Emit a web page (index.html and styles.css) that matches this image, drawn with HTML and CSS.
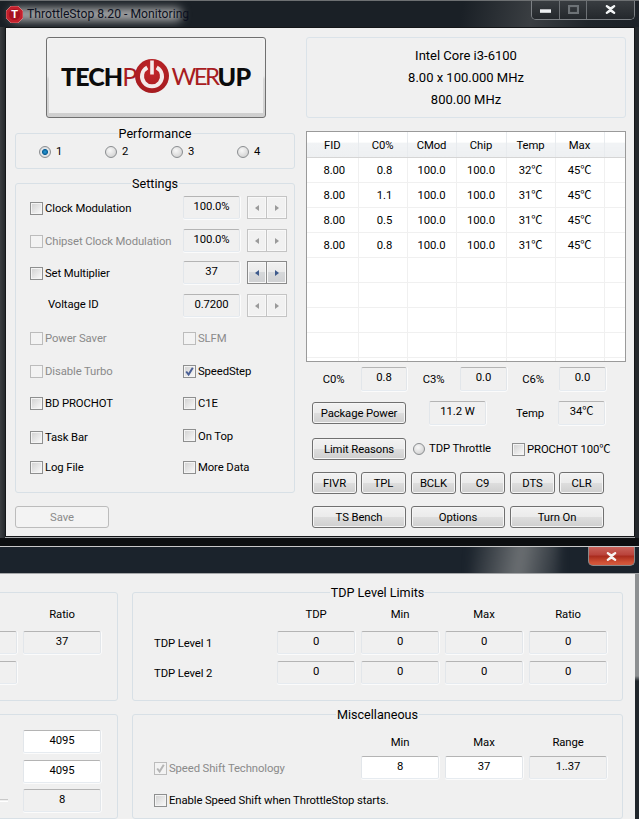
FILE: index.html
```html
<!DOCTYPE html>
<html lang="en">
<head>
<meta charset="utf-8">
<title>ThrottleStop 8.20 - Monitoring</title>
<link rel="stylesheet" href="styles.css">
</head>
<body>
<section class="window win-main">
  <header class="titlebar">
    <div class="glow"></div>
    <svg class="app-icon" width="17" height="17" viewBox="0 0 17 17"><polygon points="5,0 12,0 17,5 17,12 12,17 5,17 0,12 0,5" fill="#c2202c" stroke="#e9a0a0" stroke-width=".6"/><circle cx="8.5" cy="8.5" r="5.6" fill="#a5121f"/><text x="8.5" y="12" text-anchor="middle" class="app-t">T</text></svg>
    <h1 class="title">ThrottleStop 8.20 - Monitoring</h1>
    <div class="caption">
      <div class="cap cap-min"><svg width="11" height="4" viewBox="0 0 11 4"><rect width="11" height="3.5" y=".3" fill="#eef0f2"/></svg></div>
      <div class="cap cap-max"><svg width="11" height="9" viewBox="0 0 11 9"><rect x="1" y="1" width="9" height="7" fill="none" stroke="#6d7276" stroke-width="2.2"/></svg></div>
      <div class="cap cap-close"><svg width="11" height="9" viewBox="0 0 11 9"><path d="M1 .5 5.5 3.3 10 .5M1 8.5 5.5 5.7 10 8.5M1.5 1 9.5 8M9.5 1 1.5 8" fill="none" stroke="#f2f4f5" stroke-width="2"/></svg></div>
    </div>
  </header>
  <main class="client client-main">
    <div class="col-left">
      <div class="logo-btn">
        <div class="logo-face">
          <span class="lg-black">TECH</span><span class="lg-red">P</span>
          <svg class="power" width="34" height="36" viewBox="0 0 34 36"><defs><radialGradient id="pw" cx=".5" cy=".35" r=".75"><stop offset="0" stop-color="#c4262a"/><stop offset="1" stop-color="#a01a1e"/></radialGradient></defs><circle cx="17" cy="18" r="17" fill="url(#pw)"/><path d="M12.3 9.5A10 10 0 1 0 21.7 9.5" fill="none" stroke="#f4eaea" stroke-width="4"/><rect x="15.2" y="2.5" width="3.6" height="14" fill="#f4eaea"/></svg>
          <span class="lg-red lg-wer">WER</span><span class="lg-black lg-up">UP</span>
        </div>
      </div>

      <div class="group group-perf">
        <div class="group-title">Performance</div>
        <div class="perf-grid">
          <div class="radio-item"><span class="radio on"></span>1</div>
          <div class="radio-item"><span class="radio"></span>2</div>
          <div class="radio-item"><span class="radio"></span>3</div>
          <div class="radio-item"><span class="radio"></span>4</div>
        </div>
      </div>

      <div class="group group-settings">
        <div class="group-title">Settings</div>
        <div class="settings-grid">
          <div class="check low"><span class="cb"></span>Clock Modulation</div>
          <div class="field">100.0%</div>
          <div class="spin"><span class="sp"><i class="al"></i></span><span class="sp"><i class="ar"></i></span></div>

          <div class="check low off"><span class="cb"></span>Chipset Clock Modulation</div>
          <div class="field">100.0%</div>
          <div class="spin"><span class="sp"><i class="al"></i></span><span class="sp"><i class="ar"></i></span></div>

          <div class="check low"><span class="cb"></span>Set Multiplier</div>
          <div class="field">37</div>
          <div class="spin live"><span class="sp"><i class="al"></i></span><span class="sp"><i class="ar"></i></span></div>

          <div class="voltage">Voltage ID</div>
          <div class="field">0.7200</div>
          <div class="spin"><span class="sp"><i class="al"></i></span><span class="sp"><i class="ar"></i></span></div>

          <div class="check off"><span class="cb"></span>Power Saver</div>
          <div class="check off span2"><span class="cb"></span>SLFM</div>

          <div class="check off"><span class="cb"></span>Disable Turbo</div>
          <div class="check span2"><span class="cb"><svg width="11" height="11" viewBox="0 0 11 11"><path d="M2.2 5.5 4.6 8.6 8.8 1.8" fill="none" stroke="#4a5f95" stroke-width="2"/></svg></span>SpeedStep</div>

          <div class="check"><span class="cb"></span>BD PROCHOT</div>
          <div class="check span2"><span class="cb"></span>C1E</div>

          <div class="check"><span class="cb"></span>Task Bar</div>
          <div class="check span2 up"><span class="cb"></span>On Top</div>

          <div class="check"><span class="cb"></span>Log File</div>
          <div class="check span2"><span class="cb"></span>More Data</div>
        </div>
      </div>

      <div class="btn btn-save">Save</div>
    </div>

    <div class="col-right">
      <div class="info">
        <div>Intel Core i3-6100</div>
        <div>8.00 x 100.000 MHz</div>
        <div>800.00 MHz</div>
      </div>

      <div class="table-wrap">
        <table class="cores">
          <colgroup><col class="c1"><col class="c2"><col class="c2"><col class="c3"><col class="c2"><col class="c2"><col class="c4"></colgroup>
          <thead><tr><th>FID</th><th>C0%</th><th>CMod</th><th>Chip</th><th>Temp</th><th>Max</th><th></th></tr></thead>
          <tbody>
            <tr><td>8.00</td><td>0.8</td><td>100.0</td><td>100.0</td><td>32℃</td><td>45℃</td><td></td></tr>
            <tr><td>8.00</td><td>1.1</td><td>100.0</td><td>100.0</td><td>31℃</td><td>45℃</td><td></td></tr>
            <tr><td>8.00</td><td>0.5</td><td>100.0</td><td>100.0</td><td>31℃</td><td>45℃</td><td></td></tr>
            <tr><td>8.00</td><td>0.8</td><td>100.0</td><td>100.0</td><td>31℃</td><td>45℃</td><td></td></tr>
            <tr><td></td><td></td><td></td><td></td><td></td><td></td><td></td></tr>
            <tr><td></td><td></td><td></td><td></td><td></td><td></td><td></td></tr>
            <tr><td></td><td></td><td></td><td></td><td></td><td></td><td></td></tr>
            <tr><td></td><td></td><td></td><td></td><td></td><td></td><td></td></tr>
            <tr><td></td><td></td><td></td><td></td><td></td><td></td><td></td></tr>
          </tbody>
        </table>
      </div>

      <div class="row row-c">
        <span class="lbl l55">C0%</span><div class="field w46">0.8</div>
        <span class="lbl l53">C3%</span><div class="field w47">0.0</div>
        <span class="lbl l52">C6%</span><div class="field w47">0.0</div>
      </div>
      <div class="row row-power">
        <div class="btn w94">Package Power</div>
        <div class="field w57">11.2 W</div>
        <span class="lbl temp">Temp</span>
        <div class="field w47">34℃</div>
      </div>
      <div class="row row-limit">
        <div class="btn w94">Limit Reasons</div>
        <div class="tdp"><span class="radio"></span>TDP Throttle</div>
        <div class="check prochot"><span class="cb"></span>PROCHOT 100℃</div>
      </div>
      <div class="row row-small">
        <div class="pair"><div class="btn w45">FIVR</div><div class="btn w45">TPL</div></div>
        <div class="pair"><div class="btn w45">BCLK</div><div class="btn w45">C9</div></div>
        <div class="pair"><div class="btn w45">DTS</div><div class="btn w45">CLR</div></div>
      </div>
      <div class="row row-big">
        <div class="btn w94">TS Bench</div>
        <div class="btn w94">Options</div>
        <div class="btn w94">Turn On</div>
      </div>
    </div>
  </main>
</section>

<section class="window win-options">
  <header class="titlebar titlebar-2">
    <div class="streak"></div>
    <div class="cap-red"><svg width="11" height="9" viewBox="0 0 11 9"><path d="M1 .5 5.5 3.3 10 .5M1 8.5 5.5 5.7 10 8.5M1.5 1 9.5 8M9.5 1 1.5 8" fill="none" stroke="#f7f2f0" stroke-width="2"/></svg></div>
  </header>
  <main class="client client-options">
    <div class="group side side-top">
      <div class="side-grid side-grid-top">
        <span></span><span class="head">Ratio</span>
        <div class="field"></div><div class="field">37</div>
        <div class="field"></div>
      </div>
    </div>
    <div class="group wide wide-top">
      <div class="group-title">TDP Level Limits</div>
      <div class="wide-grid tdp-grid">
        <span></span><span class="head">TDP</span><span class="head">Min</span><span class="head">Max</span><span class="head">Ratio</span>
        <span class="rowlabel">TDP Level 1</span><div class="field">0</div><div class="field">0</div><div class="field">0</div><div class="field">0</div>
        <span class="rowlabel">TDP Level 2</span><div class="field">0</div><div class="field">0</div><div class="field">0</div><div class="field">0</div>
      </div>
    </div>
    <div class="group side side-bottom">
      <div class="side-grid side-grid-bottom">
        <span></span><div class="field white">4095</div>
        <span></span><div class="field white">4095</div>
        <span class="etch"></span><div class="field">8</div>
      </div>
    </div>
    <div class="group wide wide-bottom">
      <div class="group-title">Miscellaneous</div>
      <div class="wide-grid misc-grid">
        <span></span><span></span><span class="head">Min</span><span class="head">Max</span><span class="head">Range</span>
        <div class="check off wide-check"><span class="cb"><svg width="11" height="11" viewBox="0 0 11 11"><path d="M2.2 5.5 4.6 8.6 8.8 1.8" fill="none" stroke="#b5b5b5" stroke-width="2"/></svg></span>Speed Shift Technology</div>
        <div class="field white">8</div><div class="field white">37</div><div class="field">1..37</div>
        <div class="check full-check"><span class="cb"></span>Enable Speed Shift when ThrottleStop starts.</div>
      </div>
    </div>
  </main>
</section>
</body>
</html>
```
FILE: styles.css
```css
* { box-sizing: border-box; }
html, body { margin: 0; padding: 0; }
body {
  position: relative;
  width: 639px;
  height: 819px;
  overflow: hidden;
  background: #0c0e10;
  font: 11.3px/16px Roboto, "Noto Sans CJK SC", sans-serif;
  letter-spacing: -.1px;
  color: #000;
}
.window { position: absolute; left: 0; width: 639px; overflow: hidden; }
.win-main { top: 0; height: 538px; background: linear-gradient(90deg, #3a3d40 0, #24282c 5px); }
.win-options { top: 546px; height: 273px; background: linear-gradient(#8d9092 0, #8d9092 130px, #20262b 135px); }

/* title bars */
.titlebar {
  position: relative;
  display: flex;
  align-items: center;
  height: 27px;
  overflow: hidden;
  border-top: 1px solid #6d7072;
  background: linear-gradient(100deg, #1a2026 0, #1a2026 72%, #3a3e42 83%, #20262b 92%, #1c2127 100%);
}
.titlebar-2 {
  height: 28px;
  border-top: 1px solid #c8c8c8;
  border-bottom: 1px solid #a5a7a9;
  background: #1b232c;
}
.glow {
  position: absolute;
  left: 10px;
  top: 7px;
  width: 172px;
  height: 13px;
  border-radius: 6px;
  background: #a9aaab;
  filter: blur(5px);
}
.streak {
  position: absolute;
  left: 470px;
  top: -8px;
  width: 90px;
  height: 44px;
  background: linear-gradient(100deg, rgba(120,125,128,0) 0, #6c7073 55%, rgba(120,125,128,.1) 100%);
  filter: blur(5px);
}
.app-icon { position: relative; margin-left: 6px; flex: none; }
.app-t { font: 700 11px "Liberation Sans", sans-serif; fill: #fff; }
.title {
  position: relative;
  margin: 0 0 0 4px;
  font: 400 12.2px/16px Roboto, sans-serif;
  letter-spacing: 0;
  color: #0c1020;
  white-space: nowrap;
}
.caption {
  position: absolute;
  top: -1px;
  left: 531px;
  display: flex;
  width: 104px;
  height: 20px;
  border: 1px solid #7c8084;
  border-top: 0;
  border-radius: 0 0 5px 5px;
  overflow: hidden;
}
.cap { display: flex; align-items: center; justify-content: center; background: linear-gradient(#3a3e42, #24282c); }
.cap-min { width: 28px; border-right: 1px solid #6d7175; padding-top: 3px; }
.cap-max { width: 27px; border-right: 1px solid #6d7175; }
.cap-close { flex: 1; }
.cap-red {
  position: absolute;
  top: 0;
  left: 588px;
  width: 47px;
  height: 19px;
  display: flex;
  align-items: center;
  justify-content: center;
  border: 1px solid #8a8a8a;
  border-top: 0;
  border-radius: 0 0 5px 5px;
  background: linear-gradient(#c9625a 0, #b9423a 45%, #a82a1c 50%, #cf5135 85%, #d25a40 100%);
}

/* clients */
.client { background: #f0f0f0; }
.client-main {
  display: flex;
  gap: 11px;
  width: 630px;
  height: 510px;
  margin-left: 5px;
  padding: 9px 0 0 9px;
  border: 1px solid #141618;
  box-shadow: 0 1px 0 #a5a7a9;
}
.client-options {
  display: grid;
  grid-template-columns: 188px 491px;
  grid-template-rows: 109px 1fr;
  column-gap: 14px;
  row-gap: 13px;
  width: 635px;
  height: 245px;
  margin-left: 0;
  padding-top: 18px;
  overflow: hidden;
}
.col-left { width: 280px; flex: none; }
.col-right { width: 320px; flex: none; }

/* logo */
.logo-btn {
  width: 220px;
  height: 81px;
  margin-left: 31px;
  padding: 1px 2px 4px;
  border: 1px solid #707070;
  border-radius: 3px;
  background: linear-gradient(#f4f4f4 0, #ececec 48%, #d9d9d9 52%, #cfcfcf 100%);
}
.logo-face {
  display: flex;
  align-items: center;
  justify-content: flex-start;
  height: 100%;
  padding-left: 12px;
  background: #f0f0f0;
  font: 700 25px/30px "Lato", sans-serif;
  letter-spacing: -.9px;
}
.lg-black { color: #0b0b0b; font-weight: 900; }
.lg-red { color: #a81c22; font-weight: 400; }
.lg-wer { font-size: 24px; letter-spacing: -2.6px; }
.lg-up { letter-spacing: -.4px; }
.power { margin: -1px 2px 0 -1px; flex: none; }

/* groups */
.group {
  border: 1px solid #d8e0e6;
  border-radius: 3px;
}
.group-title {
  width: fit-content;
  height: 16px;
  margin: -8px auto 0;
  padding: 0 1px;
  background: #f0f0f0;
  font-size: 12.6px;
  letter-spacing: 0;
  line-height: 16px;
}
.group-perf { height: 36px; margin-top: 15px; }
.perf-grid {
  display: grid;
  grid-template-columns: repeat(4, 66px);
  padding: 0 0 0 23px;
  height: 20px;
}
.radio-item { display: flex; align-items: center; gap: 5px; }
.radio {
  flex: none;
  width: 12px;
  height: 12px;
  border: 1px solid #8a8d90;
  border-radius: 50%;
  background: radial-gradient(circle at 40% 35%, #f8f8f8 0, #dcdcdc 60%, #c4c4c4 100%);
}
.radio.on { background: radial-gradient(circle, #2a9bd6 0, #0b5f96 38%, #e4e6e8 46%, #cfd2d5 100%); }

.group-settings { height: 310px; margin-top: 14px; }
.settings-grid {
  display: grid;
  grid-template-columns: 153px 57px 40px;
  grid-template-rows: 33px 32px 33px 33px 33px 32px 34px 30px 30px;
  column-gap: 0;
  padding: 4px 0 0 14px;
  align-items: start;
}
.settings-grid .spin { margin-left: 7px; width: 40px; }
.span2 { grid-column: 2 / span 2; }
.check { display: flex; align-items: flex-start; gap: 2px; height: 23px; padding-top: 4px; white-space: nowrap; }
.check.low { height: 25px; padding-top: 5px; }
.check.up { height: 21px; padding-top: 3px; }
.check.off { color: #8a8a8a; }
.cb {
  flex: none;
  display: flex;
  align-items: center;
  justify-content: center;
  width: 13px;
  height: 13px;
  margin-top: 1px;
  border: 1px solid #8e8f8f;
  background: linear-gradient(135deg, #d0d0d0 0, #eeeeee 70%, #fafafa 100%);
  box-shadow: inset 0 0 0 1px #f4f4f4;
}
.check.up .cb { margin-top: 0; }
.check.off .cb { border-color: #bcbcbc; background: #f3f3f3; box-shadow: none; }
.voltage { padding-left: 18px; line-height: 21px; height: 23px; }

/* fields */
.field {
  display: flex;
  align-items: center;
  justify-content: center;
  height: 23px;
  padding-bottom: 2px;
  border: 1px solid;
  border-color: #b4b4b4 #e2e6ea #e6ebf0 #e2e6ea;
  border-radius: 2px;
  box-shadow: 0 1px 0 #fbfbfb, 1px 0 0 #fbfbfb;
  background: #f0f0f0;
  white-space: nowrap;
}
.field.white { background: #fff; }
.w46 { width: 46px; }
.w47 { width: 47px; }
.w57 { width: 57px; }

/* spinners */
.spin { display: flex; height: 23px; }
.sp {
  display: flex;
  align-items: center;
  justify-content: center;
  width: 20px;
  height: 23px;
  border: 1px solid #c4c4c4;
  background: #f1f1f1;
  box-shadow: inset 0 0 0 1px #f8f8f8;
}
.sp + .sp { border-left-width: 0; width: 20px; }
.al, .ar { width: 0; height: 0; border-top: 3.5px solid transparent; border-bottom: 3.5px solid transparent; }
.al { border-right: 4px solid #9a9a9a; }
.ar { border-left: 4px solid #9a9a9a; }
.live .sp { border-color: #8a8a8a; background: linear-gradient(#f1f1f1 0, #ebebeb 45%, #d6d8da 50%, #cfd0d2 100%); }
.live .al { border-right-color: #3e5a8c; }
.live .ar { border-left-color: #3e5a8c; }

/* buttons */
.btn {
  display: flex;
  align-items: center;
  justify-content: center;
  height: 22px;
  padding-top: 2px;
  border: 1px solid #707070;
  border-radius: 3px;
  box-shadow: inset 0 0 0 1px #f6f6f6;
  background: linear-gradient(#f2f2f2 0, #ebebeb 48%, #dddddd 52%, #cfcfcf 100%);
  white-space: nowrap;
}
.btn-save {
  width: 94px;
  margin-top: 13px;
  border-color: #bcbcbc;
  background: #f3f3f3;
  box-shadow: none;
  color: #8a8a8a;
}
.w94 { width: 94px; flex: none; }
.w45 { width: 45px; flex: none; }

/* right column */
.info {
  display: flex;
  flex-direction: column;
  align-items: center;
  width: 320px;
  height: 81px;
  padding-top: 7px;
  border: 1px solid #dbe3e9;
  border-radius: 3px;
  font-size: 13px;
  letter-spacing: 0;
  line-height: 22px;
}
.table-wrap {
  width: 320px;
  height: 231px;
  margin-top: 13px;
  border: 1px solid #9a9a9a;
  background: #fff;
  overflow: hidden;
}
.cores { width: 318px; border-collapse: collapse; table-layout: fixed; }
.c1 { width: 51px; }
.c2 { width: 49px; }
.c3 { width: 50px; }
.c4 { width: 21px; }
.cores th {
  height: 25px;
  padding: 3px 0 0;
  font-weight: 400;
  text-align: center;
  border-right: 1px solid #e8ebee;
  border-bottom: 1px solid #d5d5d5;
  background: linear-gradient(#fff 0, #fff 40%, #f1f3f5 45%, #eef0f2 100%);
}
.cores td {
  height: 25px;
  padding: 3px 0 0;
  text-align: center;
  border-left: 1px solid #f0f0f0;
  border-bottom: 1px solid #f0f0f0;
}
.cores td:first-child { border-left: 0; padding-left: 4px; }
.cores td:nth-child(2) { padding-left: 4px; }
.row { display: flex; }
.lbl { display: block; text-align: center; padding-top: 5px; }
.l55 { width: 55px; }
.l53 { width: 53px; }
.l52 { width: 52px; }
.row-c { height: 24px; margin-top: 5px; align-items: flex-start; }
.row-c .field { height: 24px; }
.row-power { height: 24px; margin-top: 10px; padding-left: 6px; align-items: flex-start; }
.row-power .btn { margin-top: 1px; }
.row-power .field { height: 24px; margin-left: 23px; }
.row-power .temp { width: 72px; padding: 5px 14px 0 0; text-align: right; }
.row-power .field.w47 { margin-left: 0; }
.row-limit { height: 22px; margin-top: 13px; padding-left: 6px; align-items: center; }
.tdp { display: flex; align-items: center; gap: 4px; margin-left: 7px; width: 99px; }
.prochot { height: 22px; }
.row-small { gap: 5px; margin-top: 12px; padding-left: 6px; }
.pair { display: flex; gap: 4px; }
.row-big { gap: 5px; margin-top: 12px; padding-left: 6px; }

/* second window groups */
.side { margin-left: -70px; width: 188px; }
.wide { margin-left: -70px; width: 491px; }
.side-grid {
  display: grid;
  grid-template-columns: 78px 78px;
  column-gap: 6px;
  padding-left: 8px;
  align-items: start;
}
.side-grid-top { grid-template-rows: 25px 30px 22px; padding-top: 13px; }
.side-grid-bottom { grid-template-rows: 30px 29px 22px; padding-top: 15px; }
.head { display: block; text-align: center; padding-top: 1px; }
.etch {
  align-self: center;
  width: 69px;
  height: 3px;
  border-top: 1px solid #c9c9c9;
  border-bottom: 1px solid #fff;
}
.side .field { height: 23px; }
.wide-grid {
  display: grid;
  grid-template-columns: 117px repeat(4, 78px);
  column-gap: 6px;
  padding: 5px 0 0 21px;
  align-items: start;
}
.tdp-grid { grid-template-rows: 25px 30px 23px; }
.rowlabel { line-height: 25px; }
.misc-grid { grid-template-rows: 22px 33px 23px; padding-top: 11px; }
.wide-check { grid-column: 1 / span 2; height: 24px; padding-top: 5px; }
.full-check { grid-column: 1 / -1; height: 22px; padding-top: 4px; }
.misc-grid .field { height: 23px; }
.wide-top .field { height: 23px; }
```
